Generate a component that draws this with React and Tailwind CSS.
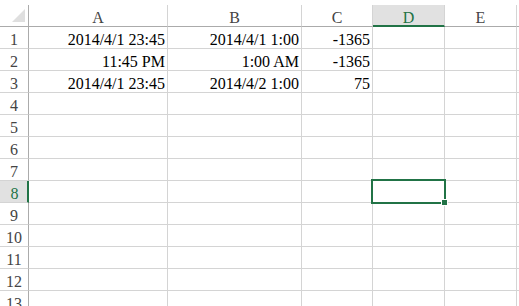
import React from "react";

const data = [
  ["2014/4/1 23:45", "2014/4/1 1:00", "-1365"],
  ["11:45 PM", "1:00 AM", "-1365"],
  ["2014/4/1 23:45", "2014/4/2 1:00", "75"],
];

const cols = ["A", "B", "C", "D", "E"];

export default function App() {
  const rows = [];
  for (let r = 1; r <= 13; r++) rows.push(r);
  return (
    <div
      className="relative w-[519px] h-[306px] overflow-hidden bg-white pt-[5px] text-[16px] text-black"
      style={{ fontFamily: '"Liberation Serif", "Times New Roman", serif' }}
    >
      <div className="grid grid-cols-[29px_139px_134px_71px_72px_72px_2px] auto-rows-[22px]">
        {/* header row */}
        <div className="relative border-r border-r-[#ababab] border-b border-b-[#ababab]">
          <svg className="absolute left-[12px] top-[4px]" width="14" height="14" viewBox="0 0 14 14">
            <polygon points="0,13 13,13 13,0" fill="#dfdfdf" />
          </svg>
        </div>
        {cols.map((c) =>
          c === "D" ? (
            <div
              key={c}
              className="flex items-end justify-center bg-[#e1e1e1] border-r border-r-[#d4d4d4] border-b-2 border-b-[#217346] leading-[16px] text-[#217346]"
            >
              <span className="relative top-[1px]">{c}</span>
            </div>
          ) : (
            <div
              key={c}
              className="flex items-end justify-center border-r border-r-[#d4d4d4] border-b border-b-[#ababab] leading-[16px] text-[#444444]"
            >
              {c}
            </div>
          )
        )}
        <div className="border-b border-b-[#ababab]" />

        {rows.map((r) => {
          const vals = data[r - 1] || ["", "", ""];
          const sel = r === 8;
          return (
            <React.Fragment key={r}>
              <div
                className={
                  sel
                    ? "flex items-end justify-center bg-[#e1e1e1] border-r-2 border-r-[#217346] border-b border-b-[#d4d4d4] leading-[16px] text-[#217346]"
                    : "flex items-end justify-center border-r border-r-[#ababab] border-b border-b-[#d4d4d4] leading-[16px] text-[#444444]"
                }
              >
                <span className={sel ? "relative left-[1px]" : ""}>{r}</span>
              </div>
              {[0, 1, 2, 3, 4].map((ci) => (
                <div
                  key={ci}
                  className="flex items-end justify-end pr-[2px] border-r border-r-[#d4d4d4] border-b border-b-[#d4d4d4] leading-[16px] whitespace-nowrap"
                >
                  {ci < 3 ? vals[ci] : ""}
                </div>
              ))}
              <div className="border-b border-b-[#d4d4d4]" />
            </React.Fragment>
          );
        })}
      </div>

      {/* selection overlay */}
      <div className="absolute left-[371px] top-[179px] w-[75px] h-[25px] border-2 border-[#217346]" />
      <div className="absolute left-[441px] top-[199px] w-[7px] h-[7px] bg-[#217346] border border-white" />
    </div>
  );
}
